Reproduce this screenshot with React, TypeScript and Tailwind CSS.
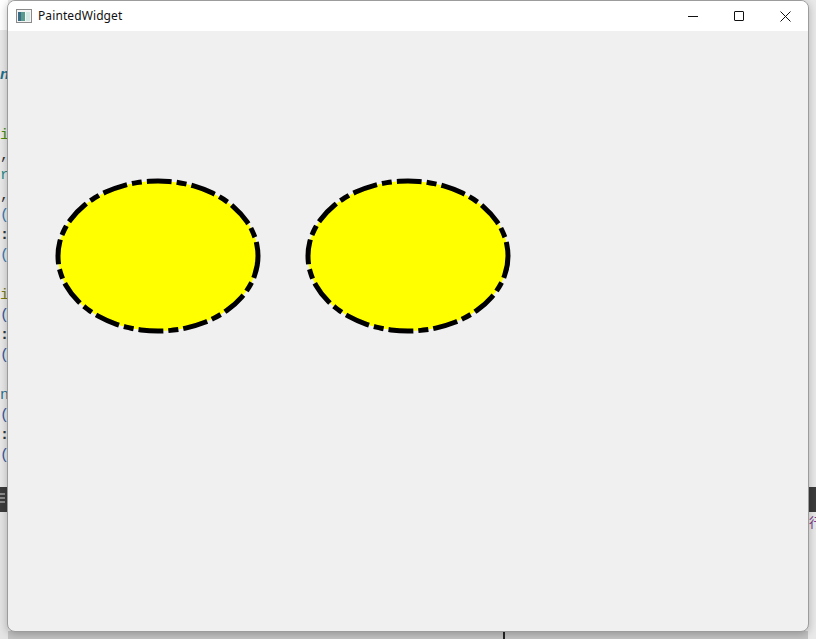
import React from 'react'

const codeLines: { t: string; c: string }[] = [
  { t: 'n', c: 'text-[#1b6f8f] font-bold italic' },
  { t: '', c: '' },
  { t: '', c: '' },
  { t: 'i', c: 'text-[#4b8b0a]' },
  { t: ',', c: 'text-[#333]' },
  { t: 'r', c: 'text-[#2a8a8a]' },
  { t: ',', c: 'text-[#333]' },
  { t: '(', c: 'text-[#3a7ab0]' },
  { t: ':', c: 'text-[#333] font-bold' },
  { t: '(', c: 'text-[#3a7ab0]' },
  { t: '', c: '' },
  { t: 'i', c: 'text-[#7a7a10]' },
  { t: '(', c: 'text-[#3a5aa0]' },
  { t: ':', c: 'text-[#333] font-bold' },
  { t: '(', c: 'text-[#3a5aa0]' },
  { t: '', c: '' },
  { t: 'n', c: 'text-[#2a6f8f]' },
  { t: '(', c: 'text-[#3a5aa0]' },
  { t: ':', c: 'text-[#333] font-bold' },
  { t: '(', c: 'text-[#3a5aa0]' },
]

function DashedEllipse({ cx, cy }: { cx: number; cy: number }) {
  return (
    <ellipse
      cx={cx}
      cy={cy}
      rx={100}
      ry={75}
      fill="#ffff00"
      stroke="#000"
      strokeWidth={5}
      strokeDasharray="20 10 5 10"
      strokeLinecap="square"
    />
  )
}

export default function App() {
  return (
    <div className="relative w-[816px] h-[639px] overflow-hidden bg-[#e9e9e9]" style={{ fontFamily: '"Liberation Mono", monospace' }}>
      {/* editor behind the window */}
      <div className="flex h-full">
        <div className="w-[8px] flex flex-col">
          <div className="h-[30px] bg-white" />
          <div className="h-[36px]" />
          {codeLines.map((l, i) => (
            <div key={i} className={`h-[20px] leading-[20px] text-[15px] text-left whitespace-nowrap ${l.c}`}>
              {l.t}
            </div>
          ))}
          <div className="h-[21px]" />
          <div className="h-[25px] bg-[#3c3c3c] flex flex-col gap-[2px] pt-[6px]">
            <div className="w-[5px] h-[2px] bg-[#8a8a8a]" />
            <div className="w-[5px] h-[2px] bg-[#8a8a8a]" />
            <div className="w-[5px] h-[2px] bg-[#8a8a8a]" />
          </div>
          <div className="flex-1 bg-[#e4e4e4]" />
        </div>
        <div className="flex-1 flex flex-col">
          <div className="flex-1" />
          <div className="h-[8px] bg-[#c4c4c4] flex">
            <div className="w-[495px]" />
            <div className="w-[2px] bg-[#222]" />
          </div>
        </div>
        <div className="w-[8px] flex flex-col">
          <div className="h-[487px] bg-[#e9e9e9]" />
          <div className="h-[25px] bg-[#3c3c3c]" />
          <div className="h-[20px] text-[13px] leading-[20px] text-[#7a3a8a] pl-[1px]" style={{ fontFamily: '"Noto Sans CJK SC", sans-serif' }}>行</div>
          <div className="flex-1" />
        </div>
      </div>

      {/* PaintedWidget window */}
      <div
        className="absolute left-[7px] top-0 w-[802px] h-[632px] flex flex-col rounded-lg border border-[#9c9c9c] bg-[#f0f0f0] overflow-hidden shadow-[0_2px_8px_rgba(0,0,0,0.25)]"
        style={{ fontFamily: '"Segoe UI", "Noto Sans", sans-serif' }}
      >
        <div className="h-[30px] bg-white flex items-center shrink-0">
          <svg width="16" height="14" viewBox="0 0 16 14" className="ml-[8px] mr-[6px] mt-[-1px]">
            <rect x="0.5" y="0.5" width="15" height="13" fill="#f4f4f4" stroke="#8a8a8a" />
            <rect x="2" y="3" width="7" height="9" fill="#5a9a8e" />
            <rect x="2" y="3" width="3" height="9" fill="#3a6c86" />
            <rect x="10" y="3" width="4" height="9" fill="#d6e8e4" />
          </svg>
          <span className="text-[12px] text-[#111] tracking-[0.1px]">PaintedWidget</span>
          <div className="flex-1" />
          <div className="w-[46px] h-full flex items-center justify-center">
            <div className="w-[10px] h-[1px] bg-[#111]" />
          </div>
          <div className="w-[46px] h-full flex items-center justify-center">
            <div className="w-[10px] h-[10px] border border-[#111] rounded-[1px]" />
          </div>
          <div className="w-[46px] h-full flex items-center justify-center">
            <svg width="11" height="11" viewBox="0 0 11 11">
              <path d="M0.5 0.5 L10.5 10.5 M10.5 0.5 L0.5 10.5" stroke="#111" strokeWidth="1" />
            </svg>
          </div>
        </div>
        <div className="flex-1 relative">
          <svg width="800" height="600" className="block">
            <DashedEllipse cx={150} cy={225} />
            <DashedEllipse cx={400} cy={225} />
          </svg>
        </div>
      </div>
    </div>
  )
}
